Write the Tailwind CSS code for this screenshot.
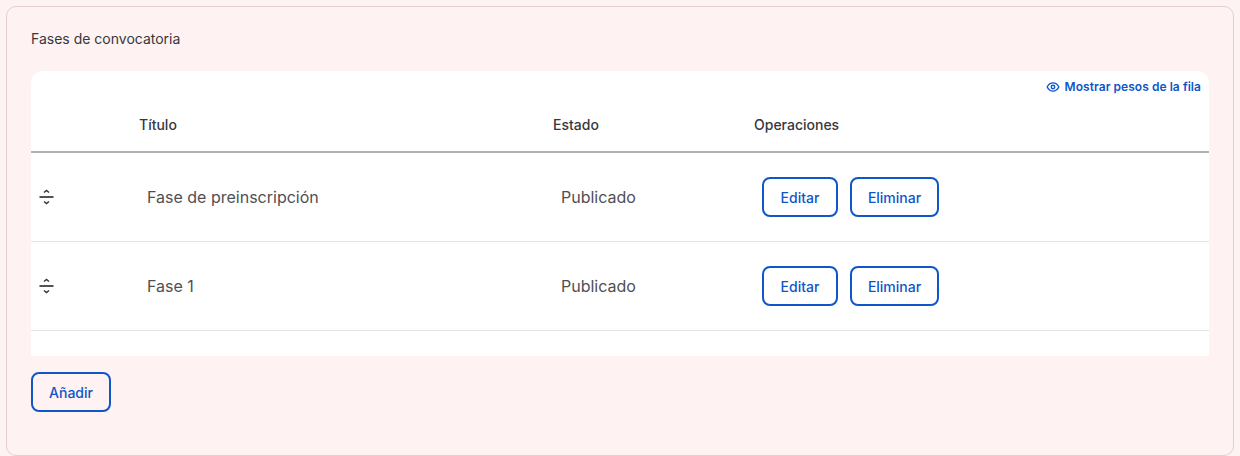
<!DOCTYPE html>
<html lang="en">
<head>
  <meta charset="UTF-8" />
  <title>Fases de convocatoria</title>
  <script src="https://cdn.jsdelivr.net/npm/@tailwindcss/browser@4"></script>
</head>
<body class="bg-[#fdf3f3] font-['Inter',sans-serif] overflow-hidden">
  <div class="mx-[6px] mt-[6px] h-[450px] rounded-[10px] border border-[#e3cfcf] bg-[#fef2f2] pl-[24px] pr-[24px] pt-[23px]">
    <h2 class="text-[14px] leading-[18px] text-[#37373c]">Fases de convocatoria</h2>

    <!-- Table -->
    <div class="mt-[23px] h-[285px] rounded-t-[12px] bg-white">
      <div class="flex h-[28px] items-start justify-end pr-[8px] pt-[9px]">
        <a class="flex items-center gap-[5px] text-[12px] leading-[14px] font-semibold tracking-[0.05px] text-[#0f56c9]">
          <svg class="w-[14px] h-[14px] -mt-[1px]" viewBox="0 0 24 24" fill="none" stroke="currentColor" stroke-width="2.4"><path d="M2 12s3.6-7 10-7 10 7 10 7-3.6 7-10 7-10-7-10-7z"/><circle cx="12" cy="12" r="3"/></svg>
          Mostrar pesos de la fila
        </a>
      </div>
      <div class="flex h-[54px] items-center border-b-2 border-[#b0b0b0] pb-[2px] text-[14px] font-medium text-[#37373c]">
        <div class="w-[108px]"></div>
        <div class="w-[414px]">Título</div>
        <div class="w-[201px]">Estado</div>
        <div>Operaciones</div>
      </div>

      <div class="flex h-[89px] items-center border-b border-[#e4e4e4] text-[16px] text-[#4f4f54]">
        <div class="w-[116px] pl-[8px]">
          <svg class="w-[15px] h-[16px]" viewBox="0 0 15 16" fill="none" stroke="#333338"><path d="M5 3.500 7.500 1.500 10 3.500" stroke-width="1.500"/><path d="M0.500 8H14.500" stroke-width="1.700"/><path d="M5 12.500 7.500 14.500 10 12.500" stroke-width="1.500"/></svg>
        </div>
        <div class="w-[414px]">Fase de preinscripción</div>
        <div class="w-[201px]">Publicado</div>
        <div class="flex gap-[12px]">
          <button class="h-[40px] w-[76px] rounded-[8px] border-2 border-[#0f56c9] text-[14px] font-medium text-[#0f56c9]">Editar</button>
          <button class="h-[40px] w-[89px] rounded-[8px] border-2 border-[#0f56c9] text-[14px] font-medium text-[#0f56c9]">Eliminar</button>
        </div>
      </div>

      <div class="flex h-[89px] items-center border-b border-[#e4e4e4] text-[16px] text-[#4f4f54]">
        <div class="w-[116px] pl-[8px]">
          <svg class="w-[15px] h-[16px]" viewBox="0 0 15 16" fill="none" stroke="#333338"><path d="M5 3.500 7.500 1.500 10 3.500" stroke-width="1.500"/><path d="M0.500 8H14.500" stroke-width="1.700"/><path d="M5 12.500 7.500 14.500 10 12.500" stroke-width="1.500"/></svg>
        </div>
        <div class="w-[414px]">Fase 1</div>
        <div class="w-[201px]">Publicado</div>
        <div class="flex gap-[12px]">
          <button class="h-[40px] w-[76px] rounded-[8px] border-2 border-[#0f56c9] text-[14px] font-medium text-[#0f56c9]">Editar</button>
          <button class="h-[40px] w-[89px] rounded-[8px] border-2 border-[#0f56c9] text-[14px] font-medium text-[#0f56c9]">Eliminar</button>
        </div>
      </div>
    </div>

    <button class="mt-[16px] h-[40px] w-[80px] rounded-[8px] border-2 border-[#0f56c9] text-[14px] font-medium text-[#0f56c9]">Añadir</button>
  </div>
</body>
</html>
